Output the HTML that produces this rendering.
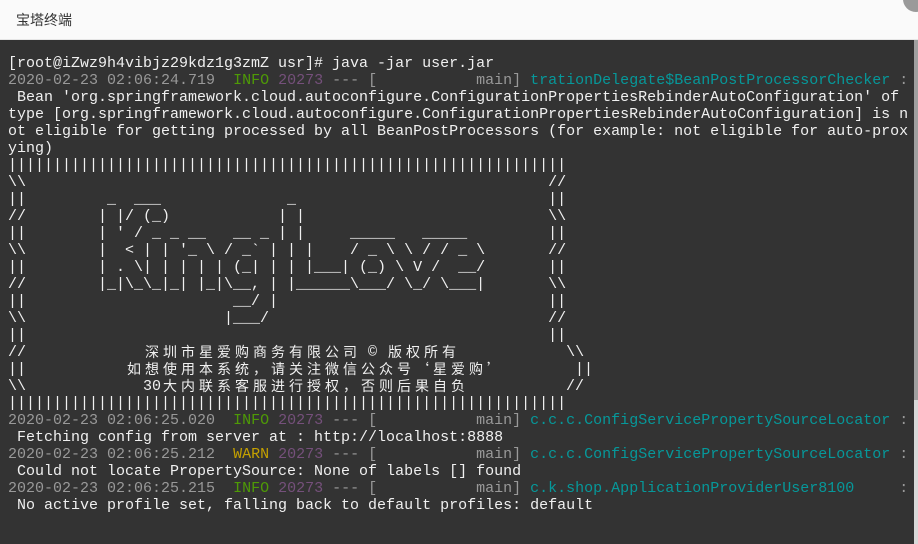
<!DOCTYPE html>
<html><head><meta charset="utf-8">
<style>
html,body{margin:0;padding:0;width:918px;height:544px;overflow:hidden;background:#333;}
#title{position:absolute;left:0;top:0;width:918px;height:40px;background:#fafafa;border-bottom:1px solid #e6e6e6;box-sizing:border-box;}
#title span{position:absolute;left:16px;top:10px;font:14px "Liberation Sans","Noto Sans CJK SC",sans-serif;color:#333;}
#close{position:absolute;left:903px;top:-14px;width:26px;height:26px;border-radius:50%;background:#9a9a9a;}
#term{position:absolute;left:0;top:40px;width:918px;height:504px;background:#333;}
#sb{position:absolute;left:914px;top:40px;width:4px;height:360px;background:#a0a0a0;}
#sb2{position:absolute;left:914px;top:400px;width:4px;height:144px;background:#d8d8d8;}
pre{position:absolute;left:8px;top:55px;margin:0;font:15px/17px "Liberation Mono","Noto Sans CJK SC",monospace;color:#f0f0f0;white-space:pre;}
.t{color:#999}.g{color:#4e9a06}.p{color:#75507b}.c{color:#06989a}.y{color:#c4a000}
.w{display:inline-block;width:18px;height:17px;line-height:17px;vertical-align:top;text-align:center;font-size:14px;font-family:"Noto Sans CJK SC",sans-serif;overflow:hidden;}
</style></head><body>
<div id="title"><span>宝塔终端</span><div id="close"></div></div>
<div id="term"></div>
<div id="sb"></div><div id="sb2"></div>
<pre>[root@iZwz9h4vibjz29kdz1g3zmZ usr]# java -jar user.jar
<span class="t">2020-02-23 02:06:24.719 </span> <span class="g">INFO</span> <span class="p">20273</span> <span class="t">--- [           main]</span> <span class="c">trationDelegate$BeanPostProcessorChecker</span> <span class="t">:</span>
 Bean 'org.springframework.cloud.autoconfigure.ConfigurationPropertiesRebinderAutoConfiguration' of
type [org.springframework.cloud.autoconfigure.ConfigurationPropertiesRebinderAutoConfiguration] is n
ot eligible for getting processed by all BeanPostProcessors (for example: not eligible for auto-prox
ying)
||||||||||||||||||||||||||||||||||||||||||||||||||||||||||||||
\\                                                          //
||         _  ___              _                            ||
//        | |/ (_)            | |                           \\
||        | ' / _ _ __   __ _ | |     _____   _____         ||
\\        |  &lt; | | '_ \ / _` | | |    / _ \ \ / / _ \       //
||        | . \| | | | | (_| | | |___| (_) \ V /  __/       ||
//        |_|\_\_|_| |_|\__, | |______\___/ \_/ \___|       \\
||                       __/ |                              ||
\\                      |___/                               //
||                                                          ||
//             <span class="w">深</span><span class="w">圳</span><span class="w">市</span><span class="w">星</span><span class="w">爱</span><span class="w">购</span><span class="w">商</span><span class="w">务</span><span class="w">有</span><span class="w">限</span><span class="w">公</span><span class="w">司</span> © <span class="w">版</span><span class="w">权</span><span class="w">所</span><span class="w">有</span>            \\
||           <span class="w">如</span><span class="w">想</span><span class="w">使</span><span class="w">用</span><span class="w">本</span><span class="w">系</span><span class="w">统</span><span class="w">，</span><span class="w">请</span><span class="w">关</span><span class="w">注</span><span class="w">微</span><span class="w">信</span><span class="w">公</span><span class="w">众</span><span class="w">号</span><span class="w">‘</span><span class="w">星</span><span class="w">爱</span><span class="w">购</span><span class="w">’</span>        ||
\\             30<span class="w">大</span><span class="w">内</span><span class="w">联</span><span class="w">系</span><span class="w">客</span><span class="w">服</span><span class="w">进</span><span class="w">行</span><span class="w">授</span><span class="w">权</span><span class="w">，</span><span class="w">否</span><span class="w">则</span><span class="w">后</span><span class="w">果</span><span class="w">自</span><span class="w">负</span>           //
||||||||||||||||||||||||||||||||||||||||||||||||||||||||||||||
<span class="t">2020-02-23 02:06:25.020 </span> <span class="g">INFO</span> <span class="p">20273</span> <span class="t">--- [           main]</span> <span class="c">c.c.c.ConfigServicePropertySourceLocator</span> <span class="t">:</span>
 Fetching config from server at : http://localhost:8888
<span class="t">2020-02-23 02:06:25.212 </span> <span class="y">WARN</span> <span class="p">20273</span> <span class="t">--- [           main]</span> <span class="c">c.c.c.ConfigServicePropertySourceLocator</span> <span class="t">:</span>
 Could not locate PropertySource: None of labels [] found
<span class="t">2020-02-23 02:06:25.215 </span> <span class="g">INFO</span> <span class="p">20273</span> <span class="t">--- [           main]</span> <span class="c">c.k.shop.ApplicationProviderUser8100    </span> <span class="t">:</span>
 No active profile set, falling back to default profiles: default</pre>
</body></html>
